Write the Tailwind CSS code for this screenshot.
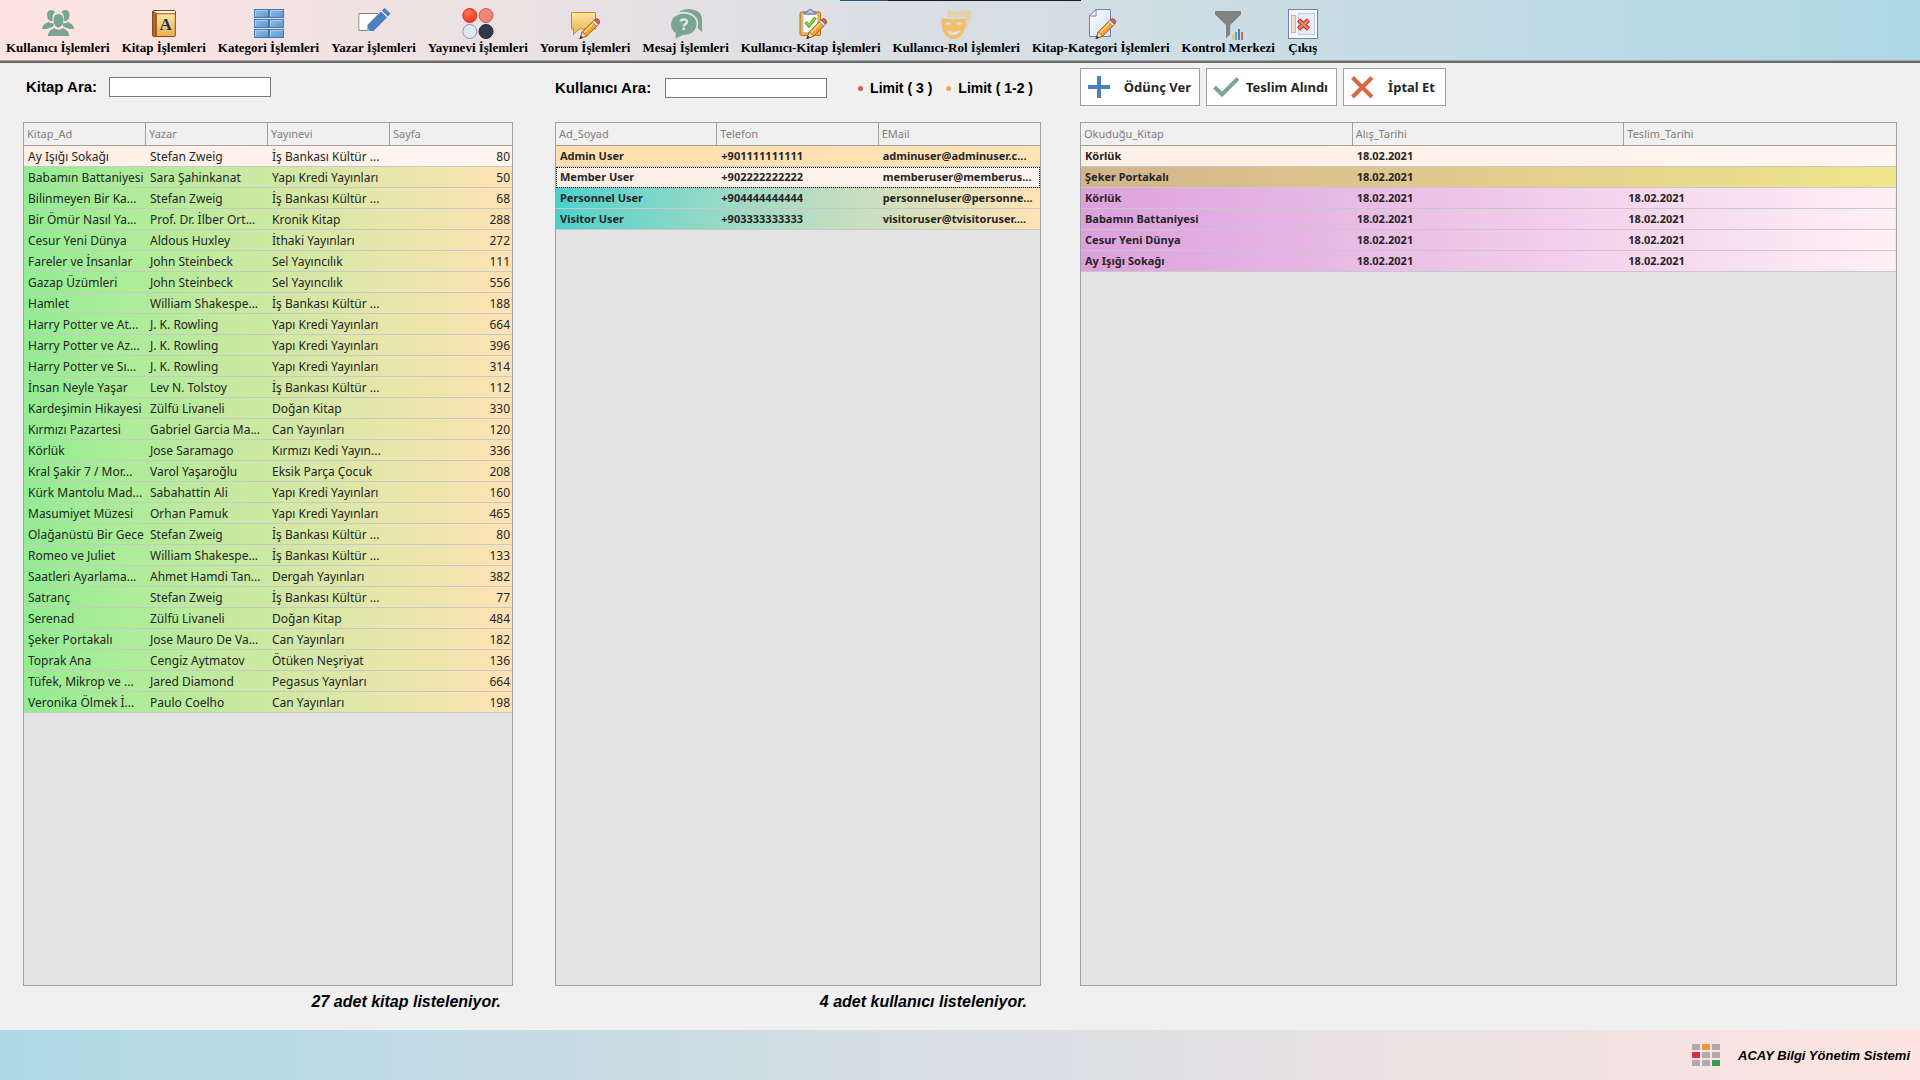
<!DOCTYPE html>
<html lang="tr">
<head>
<meta charset="utf-8">
<title>ACAY Bilgi Yönetim Sistemi</title>
<script src="https://cdn.jsdelivr.net/npm/@tailwindcss/browser@4"></script>
</head>
<body class="flex min-h-screen flex-col bg-[#f0f0f0] font-['Liberation_Sans',Arial,sans-serif] text-black">

<svg class="absolute size-0" aria-hidden="true">
  <defs>
    <linearGradient id="gold" x1="0" y1="0" x2="0" y2="1"><stop offset="0" stop-color="#fce6a4"/><stop offset="1" stop-color="#eab04e"/></linearGradient>
    <linearGradient id="tile" x1="0" y1="0" x2="1" y2="1"><stop offset="0" stop-color="#93bfe6"/><stop offset="1" stop-color="#5c95d0"/></linearGradient>
    <linearGradient id="sheet" x1="0" y1="0" x2="1" y2="1"><stop offset="0" stop-color="#ffffff"/><stop offset="1" stop-color="#d3dcf0"/></linearGradient>
    <radialGradient id="red" cx=".4" cy=".3" r=".8"><stop offset="0" stop-color="#ff7a58"/><stop offset="1" stop-color="#f22f12"/></radialGradient>
    <symbol id="pencil" viewBox="0 0 22 22" overflow="visible">
      <path d="M.5 21.5 3 14.5 14.5 3 19 7.500 7.500 19Z" fill="#f0a62e" stroke="#9c5a14"/>
      <path d="M4.500 15.500 15.500 4.500" stroke="#fddb85" stroke-width="1.500"/>
      <path d="M.5 21.500 3 14.500 7.500 19Z" fill="#f6dcb4" stroke="#7a4b20" stroke-width=".8"/>
      <path d="M0 22 1.500 18.500 3.500 20.500Z" fill="#3c2a20"/>
      <path d="M13.500 4 15.500 2 20 6.500 18 8.500Z" fill="#dfe6f4" stroke="#7080a8" stroke-width=".8"/>
      <path d="M15.500 2Q17.500-.5 20 1.500 22.500 4 20 6.500Z" fill="#e2604c" stroke="#a83426" stroke-width=".8"/>
    </symbol>
  </defs>
</svg>

<header class="relative h-[63px] border-b-2 border-b-[#6a6a6a] bg-linear-to-r from-[#ffe4e1] to-[#add8e6]">
  <div class="absolute top-0 left-[43.75%] flex h-px w-[241px]"><span class="w-12 bg-[#1f5c88]"></span><span class="flex-1 bg-[#1e1e22]"></span></div>
  <nav class="flex h-[61px] gap-3 border-b border-[#a8a8a8] pt-2 pl-1.5 font-['Liberation_Serif','Times_New_Roman',serif] text-[13px] leading-4 font-bold whitespace-nowrap" aria-label="Ana menü">
    <button class="flex flex-col items-center">
      <svg class="size-8" viewBox="0 0 32 32" fill="#78a693"><path d="M5 7Q5 2 9.500 2 12.500 2 13 4.500 10.500 6 10.500 10.500 10.500 13 9.500 13.500 5 12 5 7ZM27.500 7Q27.500 2 23 2 20 2 19.500 4.500 22 6 22 10.500 22 13 23 13.500 27.500 12 27.500 7Z"/><path d="M11.500 12Q11.500 6 16.300 6 21.500 6 21.500 12 21 18.500 16.300 19.700 12 18.500 11.500 12Z"/><path d="M0 21Q0 16.500 6.500 14 10 16 11.500 15 13 18 9 19.500 6 20 5 21ZM32 21Q32 16.500 26 14 22 16 21 15 19.500 18 23.500 19.500 26 20 27.500 21ZM5.700 28Q6 22.500 12 20 16.300 23.500 21 20 27 22.500 27.300 28Z"/></svg>
      <span>Kullanıcı İşlemleri</span>
    </button>
    <button class="flex flex-col items-center">
      <svg class="size-8" viewBox="0 0 32 32"><rect x="4.500" y="2.500" width="23" height="26" rx="1.500" fill="#b9752a" stroke="#8a4a16"/><path d="M6 3H27V5H8Z" fill="#f4f4f8"/><path d="M9 6H27V28H9Z" fill="url(#gold)"/><path d="M9 6H27V28" fill="none" stroke="#c88430" stroke-width=".8"/><path d="M5 4V28H8.500V5Z" fill="#9a5320"/><path d="M6.200 5V28" stroke="#c4824a"/><text x="17.700" y="22.300" font-size="17" text-anchor="middle" fill="#23304a">A</text></svg>
      <span>Kitap İşlemleri</span>
    </button>
    <button class="flex flex-col items-center">
      <svg class="size-8" viewBox="0 0 32 32" fill="url(#tile)" stroke="#3f78b6"><rect x="1.500" y="1.500" width="14" height="8"/><rect x="16.500" y="1.500" width="14" height="8"/><rect x="1.500" y="11.500" width="14" height="8"/><rect x="16.500" y="11.500" width="14" height="8"/><rect x="1.500" y="21.500" width="14" height="8"/><rect x="16.500" y="21.500" width="14" height="8"/><path d="M2.500 8.500V2.500H14.500M17.500 8.500V2.500H29.500M2.500 18.500V12.500H14.500M17.500 18.500V12.500H29.500M2.500 28.500V22.500H14.500M17.500 28.500V22.500H29.500" fill="none" stroke="#b5d5f0" stroke-width=".8"/></svg>
      <span>Kategori İşlemleri</span>
    </button>
    <button class="flex flex-col items-center">
      <svg class="size-8" viewBox="0 0 32 32"><path d="M20 5.500H1V22.500H9" fill="none" stroke="#808080"/><path d="M1.500 6H19.500L9.500 16V22H1.500Z" fill="#fff"/><path d="M9.500 23V17L23 3.500 29 9.500 15.500 23ZM24 2.500 26.500 0 32.500 5.500 30 8.500Z" fill="#4a80bb"/><path d="M9.500 20 12.500 23H9.500Z" fill="#8fb0d6"/></svg>
      <span>Yazar İşlemleri</span>
    </button>
    <button class="flex flex-col items-center">
      <svg class="size-8" viewBox="0 0 32 32"><circle cx="7.800" cy="7.500" r="7" fill="url(#red)" stroke="#c93a20"/><circle cx="24" cy="7.500" r="7" fill="#ec8878" stroke="#d4574c"/><circle cx="7.800" cy="23.500" r="7" fill="#dfe7f2" stroke="#8795c2"/><circle cx="24" cy="23.500" r="7" fill="#313a4d" stroke="#1f2638"/></svg>
      <span>Yayınevi İşlemleri</span>
    </button>
    <button class="flex flex-col items-center">
      <svg class="size-8" viewBox="0 0 32 32"><path d="M3 4.500H26Q26.500 4.500 26.500 5V20.500Q26.500 21 26 21H10L4.500 26.500V21H3Q2.500 21 2.500 20.500V5Q2.500 4.500 3 4.500Z" fill="url(#gold)" stroke="#c8862c"/><use href="#pencil" x="10.500" y="10" width="21" height="21"/></svg>
      <span>Yorum İşlemleri</span>
    </button>
    <button class="flex flex-col items-center">
      <svg class="size-8" viewBox="0 0 32 32"><g fill="#78a693"><path d="M8.500 4.500Q12 1 19 1 32 2 32 12V24L27.500 20Q30 11 23 6.500 16 3 8.500 4.500Z"/><path d="M13.700 5.700Q26.500 6.500 26.500 16.500 25.500 26.500 13 27L5.500 30.500 5.800 25Q1 22 1 16.500 1.500 6.500 13.700 5.700Z"/></g><path d="M8.500 4.800Q17 3 23 7 29 11.500 27.300 19.500" fill="none" stroke="#dfe0e4"/><path d="M10.500 13.500Q11 11.500 14 11.500 17 11.500 17 14 17 15.500 14.500 16.500 13.800 17 13.800 18.500" fill="none" stroke="#e4e4e6" stroke-width="2.400"/><rect x="12.500" y="19.700" width="2.600" height="2.500" fill="#e4e4e6"/></svg>
      <span>Mesaj İşlemleri</span>
    </button>
    <button class="flex flex-col items-center">
      <svg class="size-8" viewBox="0 0 32 32"><rect x="5" y="4" width="20.500" height="23.500" rx="1.500" fill="#efb04a" stroke="#b8701c"/><path d="M8 6.500H22.500V24.500H8Z" fill="#fff" stroke="#b9c3de"/><path d="M9.500 6V4H12.500Q12.500 1.500 15.300 1.500 18 1.500 18 4H21V6Z" fill="#b9c4e2" stroke="#5f72a8"/><path d="M10.500 14 14 18 20.500 9.500" fill="none" stroke="#4b9a1e" stroke-width="3"/><path d="M10.800 14 14 17.500 20 10" fill="none" stroke="#9ddb52" stroke-width="1.300"/><use href="#pencil" x="11.500" y="10" width="21" height="21"/></svg>
      <span>Kullanıcı-Kitap İşlemleri</span>
    </button>
    <button class="flex flex-col items-center">
      <svg class="size-8" viewBox="0 0 32 32"><path d="M8 9Q8 5 7.500 1.500 13 4.500 20 3 26 1.500 31.500 1.500 31.500 12 28 18 25.500 22 22.500 22L26 9Q20 10 8 9Z" fill="#e3d2b0"/><path d="M1.500 10.500Q13.500 12 25.800 10.500 26.500 30 13.500 31 .8 30 1.500 10.500Z" fill="#efbf6b"/><path d="M4.500 16Q8 12.500 11.500 16 8 17.500 4.500 16ZM15.500 16Q19 12.500 22.500 16 19 17.500 15.500 16ZM7 22.500Q13.500 25 20 22.500 19 27 13.500 27 8.500 27 7 22.500Z" fill="#dfe0e0"/></svg>
      <span>Kullanıcı-Rol İşlemleri</span>
    </button>
    <button class="flex flex-col items-center">
      <svg class="size-8" viewBox="0 0 32 32"><path d="M11 1.500H25.500V28.500H4.500V8Z" fill="url(#sheet)" stroke="#6f80b4"/><path d="M11 1.500V8H4.500Z" fill="#fff" stroke="#6f80b4"/><use href="#pencil" x="10.500" y="10" width="21" height="21"/></svg>
      <span>Kitap-Kategori İşlemleri</span>
    </button>
    <button class="flex flex-col items-center">
      <svg class="size-8" viewBox="0 0 32 32"><path d="M3 3H29V6.500L18.200 17V26L14 30.500V17L3 6.500Z" fill="#828282"/><path d="M20 26H22V32H20Z" fill="#edc272"/><path d="M23 24H25V32H23Z" fill="#6fa58c"/><path d="M26 21H28V32H26Z" fill="#4a80bb"/><path d="M29 24H31V32H29Z" fill="#dc6545"/></svg>
      <span>Kontrol Merkezi</span>
    </button>
    <button class="flex flex-col items-center">
      <svg class="size-8" viewBox="0 0 32 32"><rect x="1.500" y="1.500" width="29" height="29" fill="#f4f6fb" stroke="#6c7fb4"/><rect x="2.500" y="2.500" width="27" height="27" fill="none" stroke="#fff"/><rect x="11.500" y="5.500" width="16" height="21" fill="#e9edf6" stroke="#c3cce0"/><rect x="4.500" y="7.500" width="4" height="17" fill="#f3dccb" stroke="#d9b294"/><path d="M11.500 12 21.500 21M21.500 12 11.500 21" stroke="#b53526" stroke-width="4.600"/><path d="M12 12.500 21 20.500M21 12.500 12 20.500" stroke="#ee7d69" stroke-width="2.600"/></svg>
      <span>Çıkış</span>
    </button>
  </nav>
</header>

<main class="flex flex-1 px-[23px]">
  <section class="flex min-w-0 flex-[490] flex-col">
    <div class="flex h-[59px] items-start gap-3 pt-3.5 pl-[3px] text-[15px] leading-5 font-bold whitespace-nowrap">
      <label for="book-search">Kitap Ara:</label>
      <input id="book-search" type="text" class="h-5 w-[162px] border border-[#7a7a7a] bg-white px-1 text-sm font-normal outline-none">
    </div>
    <div class="flex-1 border border-[#a0a0a0] bg-[#e3e3e3]">
      <table class="w-full table-fixed border-separate border-spacing-0 font-['Noto_Sans',Tahoma,sans-serif] text-xs leading-[18px] whitespace-nowrap text-[#262626]">
        <thead><tr id="books-head"></tr></thead>
        <tbody id="books"></tbody>
      </table>
    </div>
    <p class="h-11 pt-1.5 pr-3 text-right text-base leading-5 font-bold italic">27 adet kitap listeleniyor.</p>
  </section>

  <section class="ml-[42px] flex min-w-0 flex-[486] flex-col">
    <div class="flex h-[59px] items-start gap-3.5 pt-[15px] text-[15px] leading-5 font-bold whitespace-nowrap">
      <label for="user-search">Kullanıcı Ara:</label>
      <input id="user-search" type="text" class="h-5 w-[162px] border border-[#7a7a7a] bg-white px-1 text-sm font-normal outline-none">
      <span class="ml-auto flex items-center gap-[7px] text-sm leading-5"><i class="size-[5px] rounded-full bg-[#d9575a]"></i>Limit ( 3 )</span>
      <span class="mr-2 flex items-center gap-[7px] text-sm leading-5"><i class="size-[5px] rounded-full bg-[#f4a460]"></i>Limit ( 1-2 )</span>
    </div>
    <div class="flex-1 border border-[#a0a0a0] bg-[#e3e3e3]">
      <table class="w-full table-fixed border-separate border-spacing-0 font-['Noto_Sans',Tahoma,sans-serif] text-[11px] leading-[18px] font-bold whitespace-nowrap text-[#262626]">
        <thead><tr id="users-head"></tr></thead>
        <tbody id="users"></tbody>
      </table>
    </div>
    <p class="h-11 pt-1.5 pr-3.5 text-right text-base leading-5 font-bold italic">4 adet kullanıcı listeleniyor.</p>
  </section>

  <section class="ml-[39px] flex min-w-0 flex-[817] flex-col">
    <div class="flex h-[59px] items-start gap-1.5 pt-[5px] font-['Noto_Sans',Tahoma,sans-serif] text-[13px] leading-5 font-bold whitespace-nowrap text-[#262626]">
      <button class="flex h-[38px] w-[120px] items-center justify-between border border-[#a0a0a0] bg-white pr-2 pl-1.5"><svg class="size-6" viewBox="0 0 24 24"><path d="M12 1V23M1 12H23" stroke="#4a80bb" stroke-width="4"/></svg>Ödünç Ver</button>
      <button class="flex h-[38px] w-[131px] items-center justify-between border border-[#a0a0a0] bg-white pr-2 pl-1.5"><svg class="h-6 w-[26px]" viewBox="0 0 26 24"><path d="M1.500 12 9 19.500 25 3.500" fill="none" stroke="#78a693" stroke-width="4"/></svg>Teslim Alındı</button>
      <button class="flex h-[38px] w-[103px] items-center justify-between border border-[#a0a0a0] bg-white pr-2.5 pl-1.5"><svg class="size-6" viewBox="0 0 24 24"><path d="M2.500 2.500 22 22M22 2.500 2.500 22" stroke="#dc6545" stroke-width="4"/></svg>İptal Et</button>
    </div>
    <div class="flex-1 border border-[#a0a0a0] bg-[#e3e3e3]">
      <table class="w-full table-fixed border-separate border-spacing-0 font-['Noto_Sans',Tahoma,sans-serif] text-[11px] leading-[18px] font-bold whitespace-nowrap text-[#262626]">
        <thead><tr id="loans-head"></tr></thead>
        <tbody id="loans"></tbody>
      </table>
    </div>
    <div class="h-11"></div>
  </section>
</main>

<footer class="flex h-[50px] items-center justify-end gap-[18px] bg-linear-to-r from-[#add8e6] to-[#ffe4e1] pr-2.5">
  <svg class="h-[22px] w-7" viewBox="0 0 28 22" fill="#b0a8ab"><path d="M0 0H8V6H0ZM20 0H28V6H20ZM10 8H18V14H10ZM20 8H28V14H20ZM0 16H8V22H0ZM10 16H18V22H10Z"/><path d="M10 0H18V6H10Z" fill="#f2973d"/><path d="M0 8H8V14H0Z" fill="#d42f45"/><path d="M20 16H28V22H20Z" fill="#359a50"/></svg>
  <p class="pt-0.5 text-[13px] leading-5 font-bold italic">ACAY Bilgi Yönetim Sistemi</p>
</footer>

<script>
const SELECTED = "bg-linear-to-r from-[#fcefe4] to-[#fff5f1]";
const GREEN = "bg-linear-to-r from-[#90ee90] to-[#ffe2b4]";
const ORANGE = "bg-linear-to-r from-[#ffdead] to-[#ffe4b5]";
const TEAL = "bg-linear-to-r from-[#48d1cc] to-[#ffe4b5]";
const KHAKI = "bg-linear-to-r from-[#d2b48c] to-[#f0e68c]";
const PLUM = "bg-linear-to-r from-[#dda0dd] to-[#fff0f5]";
const FOCUS = "outline-1 -outline-offset-1 outline-dotted outline-black";
const IS = "İş Bankası Kültür ...", YK = "Yapı Kredi Yayınları";

function fill(id, heads, rows, numeric) {
  document.getElementById(id + "-head").innerHTML = heads.map((h, i) =>
    `<th scope="col" class="h-[23px] border-b border-[#a0a0a0] bg-[#f0f0f0] p-0 pl-[3px] text-left text-[11px] font-normal text-[#7f7f7f] ${i < heads.length - 1 ? "border-r" : ""}">${h}</th>`).join("");
  document.getElementById(id).innerHTML = rows.map(([style, ...cells]) =>
    `<tr class="${style}">` + cells.map((c, i) =>
      `<td class="h-[21px] overflow-hidden border-b border-[#c8c8c8] p-0 ${numeric ? "pt-0.5" : ""} ${numeric && i === cells.length - 1 ? "pr-0.5 text-right" : "pl-1"}">${c}</td>`).join("") + "</tr>").join("");
}

fill("books", ["Kitap_Ad", "Yazar", "Yayınevi", "Sayfa"], [
  [SELECTED, "Ay Işığı Sokağı", "Stefan Zweig", IS, 80],
  [GREEN, "Babamın Battaniyesi", "Sara Şahinkanat", YK, 50],
  [GREEN, "Bilinmeyen Bir Ka...", "Stefan Zweig", IS, 68],
  [GREEN, "Bir Ömür Nasıl Ya...", "Prof. Dr. İlber Ort...", "Kronik Kitap", 288],
  [GREEN, "Cesur Yeni Dünya", "Aldous Huxley", "İthaki Yayınları", 272],
  [GREEN, "Fareler ve İnsanlar", "John Steinbeck", "Sel Yayıncılık", 111],
  [GREEN, "Gazap Üzümleri", "John Steinbeck", "Sel Yayıncılık", 556],
  [GREEN, "Hamlet", "William Shakespe...", IS, 188],
  [GREEN, "Harry Potter ve At...", "J. K. Rowling", YK, 664],
  [GREEN, "Harry Potter ve Az...", "J. K. Rowling", YK, 396],
  [GREEN, "Harry Potter ve Sı...", "J. K. Rowling", YK, 314],
  [GREEN, "İnsan Neyle Yaşar", "Lev N. Tolstoy", IS, 112],
  [GREEN, "Kardeşimin Hikayesi", "Zülfü Livaneli", "Doğan Kitap", 330],
  [GREEN, "Kırmızı Pazartesi", "Gabriel Garcia Ma...", "Can Yayınları", 120],
  [GREEN, "Körlük", "Jose Saramago", "Kırmızı Kedi Yayın...", 336],
  [GREEN, "Kral Şakir 7 / Mor...", "Varol Yaşaroğlu", "Eksik Parça Çocuk", 208],
  [GREEN, "Kürk Mantolu Mad...", "Sabahattin Ali", YK, 160],
  [GREEN, "Masumiyet Müzesi", "Orhan Pamuk", YK, 465],
  [GREEN, "Olağanüstü Bir Gece", "Stefan Zweig", IS, 80],
  [GREEN, "Romeo ve Juliet", "William Shakespe...", IS, 133],
  [GREEN, "Saatleri Ayarlama...", "Ahmet Hamdi Tan...", "Dergah Yayınları", 382],
  [GREEN, "Satranç", "Stefan Zweig", IS, 77],
  [GREEN, "Serenad", "Zülfü Livaneli", "Doğan Kitap", 484],
  [GREEN, "Şeker Portakalı", "Jose Mauro De Va...", "Can Yayınları", 182],
  [GREEN, "Toprak Ana", "Cengiz Aytmatov", "Ötüken Neşriyat", 136],
  [GREEN, "Tüfek, Mikrop ve ...", "Jared Diamond", "Pegasus Yaynları", 664],
  [GREEN, "Veronika Ölmek İ...", "Paulo Coelho", "Can Yayınları", 198],
], true);

fill("users", ["Ad_Soyad", "Telefon", "EMail"], [
  [ORANGE, "Admin User", "+901111111111", "adminuser@adminuser.c..."],
  [SELECTED + " " + FOCUS, "Member User", "+902222222222", "memberuser@memberus..."],
  [TEAL, "Personnel User", "+904444444444", "personneluser@personne..."],
  [TEAL, "Visitor User", "+903333333333", "visitoruser@tvisitoruser...."],
]);

fill("loans", ["Okuduğu_Kitap", "Alış_Tarihi", "Teslim_Tarihi"], [
  [SELECTED, "Körlük", "18.02.2021", ""],
  [KHAKI, "Şeker Portakalı", "18.02.2021", ""],
  [PLUM, "Körlük", "18.02.2021", "18.02.2021"],
  [PLUM, "Babamın Battaniyesi", "18.02.2021", "18.02.2021"],
  [PLUM, "Cesur Yeni Dünya", "18.02.2021", "18.02.2021"],
  [PLUM, "Ay Işığı Sokağı", "18.02.2021", "18.02.2021"],
]);
</script>
</body>
</html>
